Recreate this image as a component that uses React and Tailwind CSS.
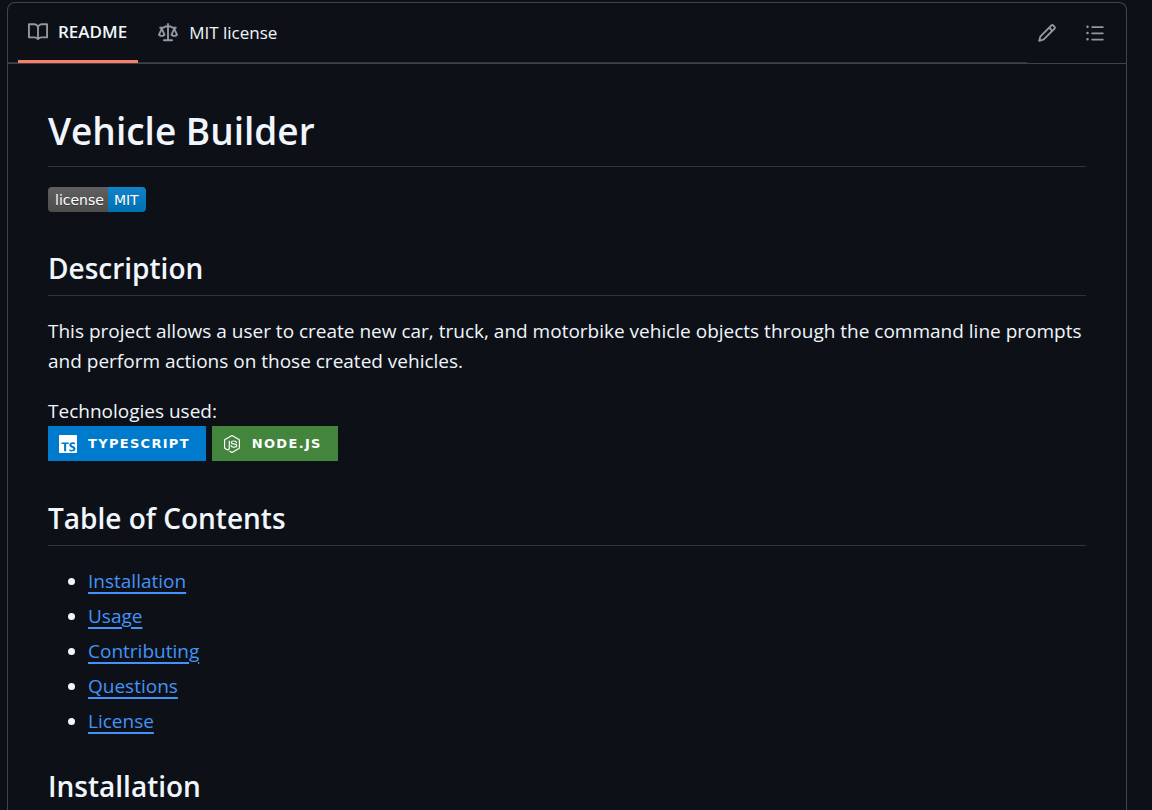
import { SiTypescript, SiNodedotjs } from "react-icons/si";

const contents = ["Installation", "Usage", "Contributing", "Questions", "License"];

const icons = {
  book: "M0 1.75A.75.75 0 0 1 .75 1h4.253c1.227 0 2.317.59 3 1.501A3.743 3.743 0 0 1 11.006 1h4.245a.75.75 0 0 1 .75.75v10.5a.75.75 0 0 1-.75.75h-4.507a2.25 2.25 0 0 0-1.591.659l-.622.621a.75.75 0 0 1-1.06 0l-.622-.621A2.25 2.25 0 0 0 5.258 13H.75a.75.75 0 0 1-.75-.75Zm7.251 10.324.004-5.073-.002-2.253A2.25 2.25 0 0 0 5.003 2.5H1.5v9h3.757a3.75 3.75 0 0 1 1.994.574ZM8.755 4.75l-.004 7.322a3.752 3.752 0 0 1 1.992-.572H14.5v-9h-3.495a2.25 2.25 0 0 0-2.25 2.25Z",
  law: "M8.75.75V2h.985c.304 0 .603.08.867.231l1.29.736c.038.022.08.033.124.033h2.234a.75.75 0 0 1 0 1.5h-.427l2.111 4.692a.75.75 0 0 1-.154.838l-.53-.53.529.531-.001.002-.002.002-.006.006-.006.005-.01.01-.045.04c-.21.176-.441.327-.686.45C14.556 10.78 13.88 11 13 11a4.498 4.498 0 0 1-2.023-.454 3.544 3.544 0 0 1-.686-.45l-.045-.04-.016-.015-.006-.006-.004-.004v-.001a.75.75 0 0 1-.154-.838L12.178 4.5h-.162c-.305 0-.604-.079-.868-.231l-1.29-.736a.245.245 0 0 0-.124-.033H8.75V13h2.5a.75.75 0 0 1 0 1.5h-6.5a.75.75 0 0 1 0-1.5h2.5V3.5h-.984a.245.245 0 0 0-.124.033l-1.289.737c-.265.15-.564.23-.869.23h-.162l2.112 4.692a.75.75 0 0 1-.154.838l-.53-.53.529.531-.001.002-.002.002-.006.006-.016.015-.045.04c-.21.176-.441.327-.686.45C4.556 10.78 3.88 11 3 11a4.498 4.498 0 0 1-2.023-.454 3.544 3.544 0 0 1-.686-.45l-.045-.04-.016-.015-.006-.006-.004-.004v-.001a.75.75 0 0 1-.154-.838L2.178 4.5H1.75a.75.75 0 0 1 0-1.5h2.234a.249.249 0 0 0 .125-.033l1.288-.737c.265-.15.564-.23.869-.23h.984V.75a.75.75 0 0 1 1.5 0Zm2.945 8.477c.285.135.718.273 1.305.273s1.02-.138 1.305-.273L13 6.327Zm-10 0c.285.135.718.273 1.305.273s1.02-.138 1.305-.273L3 6.327Z",
  pencil:
    "M11.013 1.427a1.75 1.75 0 0 1 2.474 0l1.086 1.086a1.75 1.75 0 0 1 0 2.474l-8.61 8.61c-.21.21-.47.364-.756.445l-3.251.93a.75.75 0 0 1-.927-.928l.929-3.25c.081-.286.235-.547.445-.758l8.61-8.61Zm.176 4.823L9.75 4.81l-6.286 6.287a.253.253 0 0 0-.064.108l-.558 1.953 1.953-.558a.253.253 0 0 0 .108-.064Zm1.238-3.763a.25.25 0 0 0-.354 0L10.811 3.75l1.439 1.44 1.263-1.263a.25.25 0 0 0 0-.354Z",
  list: "M5.75 2.5h8.5a.75.75 0 0 1 0 1.5h-8.5a.75.75 0 0 1 0-1.5Zm0 5h8.5a.75.75 0 0 1 0 1.5h-8.5a.75.75 0 0 1 0-1.5Zm0 5h8.5a.75.75 0 0 1 0 1.5h-8.5a.75.75 0 0 1 0-1.5ZM2 14a1 1 0 1 1 0-2 1 1 0 0 1 0 2Zm1-6a1 1 0 1 1-2 0 1 1 0 0 1 2 0ZM2 4a1 1 0 1 1 0-2 1 1 0 0 1 0 2Z",
};

function Icon({ name }) {
  return (
    <svg viewBox="0 0 16 16" fill="currentColor" className="size-5 text-[#9198a1]" aria-hidden="true">
      <path d={icons[name]} />
    </svg>
  );
}

function SectionHeading({ id, children }) {
  return (
    <h2
      id={id}
      className="mt-[30px] mb-5 border-b border-[#2f353d] pb-[7px] text-[28px] leading-[40px] font-semibold"
    >
      {children}
    </h2>
  );
}

function TechBadge({ logo: Logo, className, children }) {
  return (
    <a
      href="#description"
      className={`flex h-[35px] items-center gap-[11px] pr-4 pl-[11px] font-['DejaVu_Sans',Verdana,sans-serif] text-[13px] font-bold tracking-widest text-white ${className}`}
    >
      <Logo className="size-[18px]" aria-hidden="true" />
      <span>{children}</span>
    </a>
  );
}

export default function App() {
  return (
    <div className="min-h-screen bg-[#0d1117] pt-[2px] pr-[25px] pl-[7px] font-['Open_Sans','Noto_Sans',sans-serif] text-[#f0f6fc]">
      <section className="min-h-[calc(100vh-2px)] rounded-t-[8px] border border-b-0 border-[#3d444d]">
        <header className="flex h-[61px] items-stretch border-b border-[#3d444d]">
          <nav
            aria-label="Repository files"
            className="flex flex-1 items-stretch gap-2 border-b border-[#2f363e] pl-[10px] text-[17px]"
          >
            <a
              href="#readme"
              aria-current="page"
              className="-mb-px flex items-center gap-[10px] border-b-[3px] border-[#f78166] pr-[11px] pl-[10px] font-semibold"
            >
              <Icon name="book" />
              README
            </a>
            <a href="#license" className="flex items-center gap-[11px] px-3">
              <Icon name="law" />
              MIT license
            </a>
          </nav>
          <div className="flex items-center gap-2 pr-[11px]">
            <button type="button" aria-label="Edit file" className="flex size-10 items-center justify-center">
              <Icon name="pencil" />
            </button>
            <button type="button" aria-label="Outline" className="flex size-10 items-center justify-center">
              <Icon name="list" />
            </button>
          </div>
        </header>

        <article id="readme" className="p-10 text-[19px] leading-[30px]">
          <h1 className="mb-5 border-b border-[#2f353d] pb-2 text-[37px] leading-[54px] font-semibold">
            Vehicle Builder
          </h1>
          <p className="flex h-[31px]">
            <a
              href="#license"
              className="flex h-[25px] overflow-hidden rounded-[4px] font-['DejaVu_Sans',Verdana,sans-serif] text-[14px] leading-[26px] text-white text-shadow-[0_1px_0_#0000004d]"
            >
              <span className="bg-linear-to-b from-[#606060] to-[#4d4d4d] pr-1 pl-[7px]">license</span>
              <span className="bg-linear-to-b from-[#1283c9] to-[#0070b4] pr-[7px] pl-[6px]">MIT</span>
            </a>
          </p>

          <SectionHeading id="description">Description</SectionHeading>
          <p>
            This project allows a user to create new car, truck, and motorbike vehicle objects through the command line
            prompts and perform actions on those created vehicles.
          </p>
          <div className="mt-5 pb-[7px]">
            <p>Technologies used:</p>
            <div className="flex gap-[6px]">
              <TechBadge logo={SiTypescript} className="bg-[#007acc]">
                TYPESCRIPT
              </TechBadge>
              <TechBadge logo={SiNodedotjs} className="bg-[#43853d]">
                NODE.JS
              </TechBadge>
            </div>
          </div>

          <SectionHeading id="contents">Table of Contents</SectionHeading>
          <ul className="flex list-disc flex-col gap-[5px] pl-10">
            {contents.map((name) => (
              <li key={name}>
                <a
                  href={`#${name.toLowerCase()}`}
                  className="text-[#4493f8] underline decoration-2 underline-offset-4"
                >
                  {name}
                </a>
              </li>
            ))}
          </ul>

          <SectionHeading id="installation">Installation</SectionHeading>
        </article>
      </section>
    </div>
  );
}
